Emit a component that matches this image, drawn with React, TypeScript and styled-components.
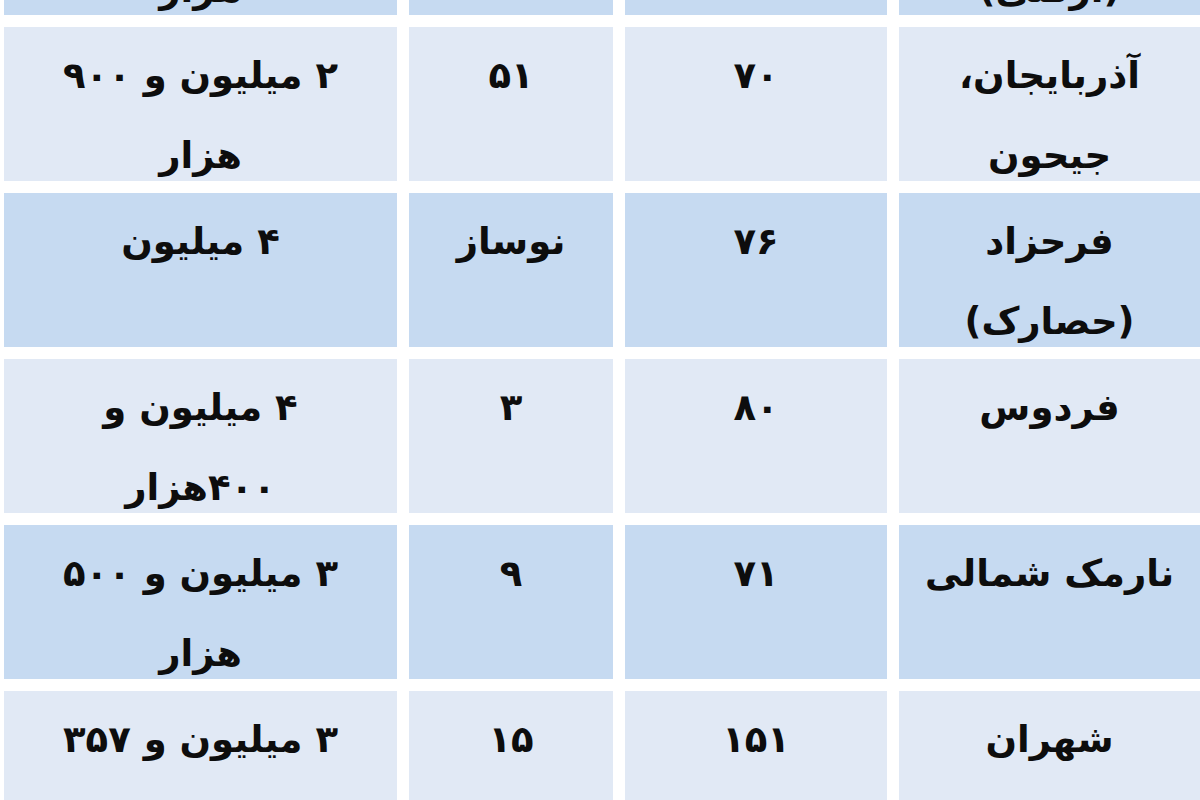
import styled, { createGlobalStyle } from 'styled-components'

const GlobalStyle = createGlobalStyle`
  html, body {
    margin: 0;
    padding: 0;
    background: #ffffff;
    overflow: hidden;
  }
`

const Page = styled.div`
  width: 1200px;
  height: 800px;
  overflow: hidden;
  background: #ffffff;
`

const Table = styled.div`
  direction: rtl;
  display: grid;
  grid-template-columns: 301px 262px 204px 393px;
  grid-auto-rows: 154px;
  column-gap: 12px;
  row-gap: 12px;
  padding-left: 4px;
  margin-top: -139px;
  font-family: "DejaVu Sans", sans-serif;
  font-weight: bold;
  color: #0d0d0d;
`

const Cell = styled.div<{ $tone: 'light' | 'blue' }>`
  background: ${({$tone}) => ($tone === 'blue' ? '#c6daf1' : '#e1e9f5')};
  padding-top: 9px;
  font-size: 37px;
  line-height: 80px;
  text-align: center;
  white-space: pre-line;
`

interface RowData {
  area: string
  size: string
  age: string
  price: string
}

// the first row is scrolled past the top edge: only its second lines show
const rows: RowData[] = [
  {area: '\n(ازگلی)', size: '', age: '', price: '\nهزار'},
  {area: 'آذربایجان،\nجیحون', size: '۷۰', age: '۵۱', price: '۲ میلیون و ۹۰۰\nهزار'},
  {area: 'فرحزاد\n(حصارک)', size: '۷۶', age: 'نوساز', price: '۴ میلیون'},
  {area: 'فردوس', size: '۸۰', age: '۳', price: '۴ میلیون و\n۴۰۰هزار'},
  {area: 'نارمک شمالی', size: '۷۱', age: '۹', price: '۳ میلیون و ۵۰۰\nهزار'},
  {area: 'شهران', size: '۱۵۱', age: '۱۵', price: '۳ میلیون و ۳۵۷\nهزار'},
]

export default function App() {
  return (
    <Page>
      <GlobalStyle />
      <Table>
        {rows.map((row, i) => {
          const tone = i % 2 === 0 ? 'blue' : 'light'
          return [
            <Cell key={`a${i}`} $tone={tone}>{row.area}</Cell>,
            <Cell key={`s${i}`} $tone={tone}>{row.size}</Cell>,
            <Cell key={`g${i}`} $tone={tone}>{row.age}</Cell>,
            <Cell key={`p${i}`} $tone={tone}>{row.price}</Cell>,
          ]
        })}
      </Table>
    </Page>
  )
}
